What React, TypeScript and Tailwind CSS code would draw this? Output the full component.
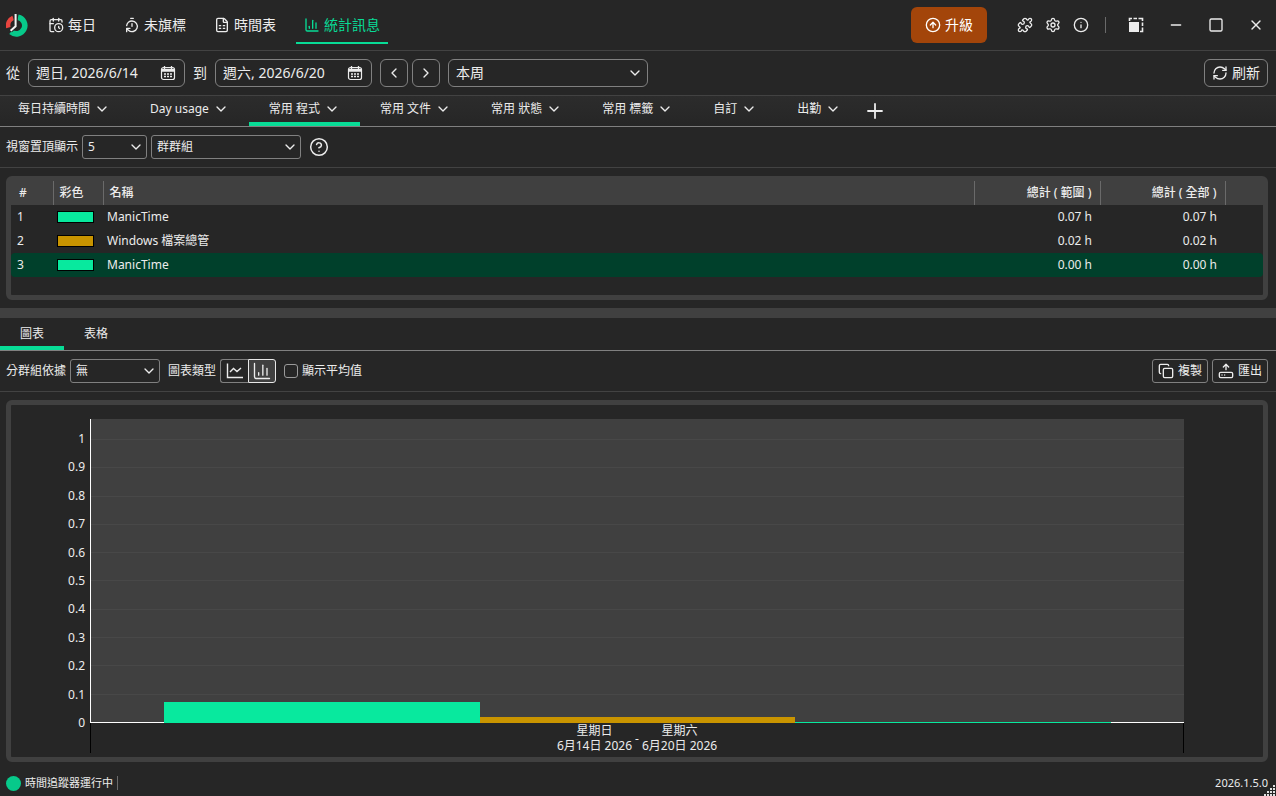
import type { ReactNode } from "react";
import {
	CalendarClock,
	ChartColumn,
	ChevronDown,
	ChevronLeft,
	ChevronRight,
	CircleArrowUp,
	CircleQuestionMark,
	Copy,
	FileSpreadsheet,
	HardDriveUpload,
	Info,
	Minus,
	Plus,
	Puzzle,
	RefreshCw,
	Settings,
	Square,
	TimerReset,
	X,
} from "lucide-react";
import clsx from "clsx";

const navItems = [
	{ label: "每日", icon: CalendarClock },
	{ label: "未旗標", icon: TimerReset },
	{ label: "時間表", icon: FileSpreadsheet },
	{ label: "統計訊息", icon: ChartColumn, active: true },
];

const reportTabs = [
	"每日持續時間",
	"Day usage",
	"常用 程式",
	"常用 文件",
	"常用 狀態",
	"常用 標籤",
	"自訂",
	"出勤",
];

const rows = [
	{ color: "bg-[#08e99e]", name: "ManicTime", range: "0.07 h", total: "0.07 h", hours: 0.074 },
	{ color: "bg-[#c99400]", name: "Windows 檔案總管", range: "0.02 h", total: "0.02 h", hours: 0.022 },
	{ color: "bg-[#08e99e]", name: "ManicTime", range: "0.00 h", total: "0.00 h", hours: 0.003 },
];

const axisLabels = ["1", "0.9", "0.8", "0.7", "0.6", "0.5", "0.4", "0.3", "0.2", "0.1", "0"];

function Logo() {
	return (
		<svg viewBox="0 0 22 24" className="h-6 w-[22px]" fill="none" aria-hidden="true">
			<path d="M12 4.2A8.4 8.4 0 1 1 5 18.9" stroke="#07c98a" strokeWidth="5.6" />
			<path d="M2.4 14.6A8.4 8.4 0 0 1 7.2 4.8" stroke="#e8453f" strokeWidth="4.6" />
			<path d="M9.6 1v12.2l-5 4.6" stroke="#262626" strokeWidth="4" />
			<path d="M9.6 1v12.2l-5 4.6" stroke="#f2f2f2" strokeWidth="2" />
		</svg>
	);
}

function CalendarIcon() {
	return (
		<svg viewBox="0 0 16 16" className="size-4" fill="none" stroke="currentColor" aria-hidden="true">
			<rect x="1.5" y="2.5" width="13" height="12" rx="2" strokeWidth="1.2" />
			<path d="M2 4.5h12M4.5 1v3M11.5 1v3M2 6h12" strokeWidth="1.3" />
			<path d="M4 9h2M7 9h2M10 9h2M4 11.5h2M7 11.5h2M10 11.5h2" strokeWidth="1.6" />
		</svg>
	);
}

function CompactIcon() {
	return (
		<svg viewBox="0 0 16 16" className="size-4" fill="none" stroke="currentColor" aria-hidden="true">
			<rect x="1" y="5" width="10" height="10" fill="currentColor" stroke="none" />
			<path d="M1.5 4V1.5H4M5.5 1.5h3.5M10.5 1.5h4V4M14.5 5.5V9M14.5 10.5v4H12" strokeWidth="1.6" />
		</svg>
	);
}

function LineChartIcon() {
	return (
		<svg viewBox="0 0 18 18" className="size-[18px]" fill="none" stroke="currentColor" strokeWidth="1.4" aria-hidden="true">
			<path d="M1.5 1.5v14h15.5" />
			<path d="m4 10 3.5-3.5 3.5 3 4-3.5" />
		</svg>
	);
}

function Select({ id, label, value, className }: { id: string; label?: string; value: string; className: string }) {
	return (
		<div className={clsx("grid items-center", className)}>
			<select
				id={id}
				aria-label={label}
				className="col-start-1 row-start-1 h-full w-full appearance-none rounded-[inherit] border border-[#808080] bg-transparent text-inherit"
			>
				<option>{value}</option>
			</select>
			<ChevronDown className="pointer-events-none col-start-1 row-start-1 mr-[3px] size-4 justify-self-end" />
		</div>
	);
}

function DateBox({ id, value }: { id: string; value: string }) {
	return (
		<div className="flex h-7 w-[157px] items-center rounded-md border border-[#808080] pl-[7px] pr-2">
			<input id={id} defaultValue={value} className="min-w-0 flex-1 bg-transparent outline-none" />
			<button type="button" aria-label="Open calendar">
				<CalendarIcon />
			</button>
		</div>
	);
}

function SmallButton({ children }: { children: ReactNode }) {
	return (
		<button type="button" className="flex h-6 w-14 items-center justify-between rounded-[3px] border border-[#808080] px-[5px]">
			{children}
		</button>
	);
}

function TitleBar() {
	return (
		<header className="flex h-[51px] shrink-0 items-center border-b border-[#424242] pl-1.5 text-sm">
			<Logo />
			<nav className="ml-3 flex h-full items-center gap-3">
				{navItems.map(({ label, icon: Icon, active }) => (
					<a
						key={label}
						href="#"
						className={clsx(
							"flex h-[38px] items-center gap-1 border-b-2 px-2 pt-0.5",
							active ? "border-[#08dc96] text-[#08dc96]" : "border-transparent",
						)}
					>
						<Icon className="size-4" />
						{label}
					</a>
				))}
			</nav>
			<button type="button" className="ml-auto flex h-9 w-[76px] items-center justify-center gap-1 rounded-md bg-[#a3450a] text-white">
				<CircleArrowUp className="size-4" />
				升級
			</button>
			<div className="ml-6 flex items-center">
				<button type="button" aria-label="Plugins" className="flex w-7 justify-center">
					<Puzzle className="size-4" />
				</button>
				<button type="button" aria-label="Settings" className="flex w-7 justify-center">
					<Settings className="size-4" />
				</button>
				<button type="button" aria-label="About" className="flex w-7 justify-center">
					<Info className="size-4" />
				</button>
			</div>
			<div className="mx-2.5 h-4 w-px bg-[#6a6a6a]" />
			{/* Window buttons */}
			<button type="button" aria-label="Compact view" className="flex w-10 justify-center">
				<CompactIcon />
			</button>
			<button type="button" aria-label="Minimize" className="flex w-10 justify-center">
				<Minus className="size-4" />
			</button>
			<button type="button" aria-label="Maximize" className="flex w-10 justify-center">
				<Square className="size-4" />
			</button>
			<button type="button" aria-label="Close" className="flex w-10 justify-center">
				<X className="size-4" />
			</button>
		</header>
	);
}

function RangeBar() {
	return (
		<div className="flex h-[45px] shrink-0 items-center gap-2 border-b border-[#424242] pl-1.5 pr-2 text-sm">
			<label htmlFor="from">從</label>
			<DateBox id="from" value="週日, 2026/6/14" />
			<label htmlFor="to">到</label>
			<DateBox id="to" value="週六, 2026/6/20" />
			<div className="flex gap-1">
				<button type="button" aria-label="Previous" className="flex size-7 items-center justify-center rounded-md border border-[#808080]">
					<ChevronLeft className="size-4" />
				</button>
				<button type="button" aria-label="Next" className="flex size-7 items-center justify-center rounded-md border border-[#808080]">
					<ChevronRight className="size-4" />
				</button>
			</div>
			<Select id="period" label="Period" value="本周" className="h-7 w-[200px] rounded-md [&>select]:pl-[7px] [&>svg]:mr-[5px]" />
			<button type="button" className="ml-auto flex h-7 w-16 items-center justify-center gap-1 rounded-md border border-[#808080]">
				<RefreshCw className="size-4" />
				刷新
			</button>
		</div>
	);
}

function ReportTabs() {
	return (
		<nav className="flex h-[31px] shrink-0 border-b border-[#808080] bg-linear-to-b from-[#2c2c2c] to-[#262626]">
			{reportTabs.map((tab) => (
				<button
					key={tab}
					type="button"
					className={clsx(
						"flex items-center gap-1 border-b-4 px-5 first:pl-[18px]",
						tab === "常用 程式" ? "border-[#08dc96]" : "border-transparent",
					)}
				>
					{tab}
					<ChevronDown className="size-4" />
				</button>
			))}
			<button type="button" aria-label="Add tab" className="ml-0.5">
				<Plus className="size-6" strokeWidth={1.8} />
			</button>
		</nav>
	);
}

function UsageTable() {
	return (
		<div className="mx-1.5 mr-2 mt-2 h-[124px] shrink-0 rounded-md border-[5px] border-[#404040]">
			<table className="w-full table-fixed text-left">
				<thead className="bg-[#404040]">
					<tr className="h-6 *:border-r *:border-[#6a6a6a] *:font-medium">
						<th className="w-[42px] pl-2">#</th>
						<th className="w-[50px] pl-1.5">彩色</th>
						<th className="pl-1.5">名稱</th>
						<th className="w-[126px] pr-2 text-right">總計 ( 範圍 )</th>
						<th className="w-[125px] pr-2 text-right">總計 ( 全部 )</th>
						<th className="w-[38px] border-r-0!" />
					</tr>
				</thead>
				<tbody>
					{rows.map((row, i) => (
						<tr key={i} className={clsx("h-6", i === 2 && "bg-[#00402b]")}>
							<td className="rounded-l-sm pl-1.5">{i + 1}</td>
							<td className="pl-1">
								<div className={clsx("h-3 w-[37px] border border-black", row.color)} />
							</td>
							<td className="pl-1">{row.name}</td>
							<td className="pr-2 text-right">{row.range}</td>
							<td className="pr-2 text-right">{row.total}</td>
							<td className="rounded-r-sm" />
						</tr>
					))}
				</tbody>
			</table>
		</div>
	);
}

function ChartToolbar() {
	return (
		<div className="flex h-[41px] shrink-0 items-center gap-1 border-b border-[#424242] pl-1.5 pr-2">
			<label htmlFor="group-by">分群組依據</label>
			<Select id="group-by" value="無" className="h-6 w-[90px] rounded-[3px] [&>select]:pl-[5px]" />
			<span className="ml-1">圖表類型</span>
			<div className="flex">
				<button
					type="button"
					aria-label="Line chart"
					className="flex h-6 w-7 items-center justify-center rounded-l-[3px] border border-r-0 border-[#808080]"
				>
					<LineChartIcon />
				</button>
				<button
					type="button"
					aria-label="Bar chart"
					aria-pressed="true"
					className="flex h-6 w-7 items-center justify-center rounded-r-[3px] border border-[#e8e8e8] bg-[#404040]"
				>
					<ChartColumn className="size-5" strokeWidth={1.6} />
				</button>
			</div>
			<label className="ml-1 flex items-center gap-1">
				<input type="checkbox" className="size-3.5 appearance-none rounded-[3px] border border-[#9a9a9a]" />
				顯示平均值
			</label>
			<div className="ml-auto flex gap-1">
				<SmallButton>
					<Copy className="size-4" />
					複製
				</SmallButton>
				<SmallButton>
					<HardDriveUpload className="size-4" />
					匯出
				</SmallButton>
			</div>
		</div>
	);
}

function Chart() {
	return (
		<div className="mx-1.5 mr-2 mt-2 flex min-h-[362px] flex-1 flex-col rounded-md border-[5px] border-[#404040] px-[79px] pb-1 pt-3.5">
			<div className="flex flex-1">
				{/* Hour labels, each centred on its grid line */}
				<div className="-mb-2 -ml-12 mt-3 flex w-12 flex-col justify-between pr-[5px] text-right">
					{axisLabels.map((label) => (
						<span key={label}>{label}</span>
					))}
				</div>
				<div className="grid flex-1 border-l border-white bg-[#404040]">
					<div className="col-start-1 row-start-1 flex flex-col border-b border-white pt-5">
						{axisLabels.slice(1).map((label) => (
							<div key={label} className="flex-1 border-t border-[#484848]" />
						))}
					</div>
					<div className="col-start-1 row-start-1 grid grid-cols-[3fr_13fr_13fr_13fr_3fr] items-end pt-5">
						{rows.map((row, i) => (
							<div
								key={i}
								className={clsx("first:col-start-2", row.color)}
								style={{ height: `${row.hours * 100}%` }}
							/>
						))}
					</div>
				</div>
			</div>
			<div className="flex h-[30px] items-center justify-center gap-[3px] border-x border-black text-center leading-[15px]">
				<div>
					星期日
					<br />
					6月14日 2026
				</div>
				<span>-</span>
				<div>
					星期六
					<br />
					6月20日 2026
				</div>
			</div>
		</div>
	);
}

function StatusBar() {
	return (
		<footer className="relative flex h-[34px] shrink-0 items-center gap-1 pl-1.5 pr-2 pt-2 text-[11px]">
			<span className="size-[15px] rounded-full bg-[#07c98a]" />
			<span>時間追蹤器運行中</span>
			<span className="h-3.5 w-px bg-[#6a6a6a]" />
			<span className="ml-auto">2026.1.5.0</span>
			{/* Resize grip */}
			<svg viewBox="0 0 12 12" className="absolute bottom-0 right-0 size-3" fill="#e0e0e0" aria-hidden="true">
				<path d="M9 1h2v2H9zM6 4h2v2H6zM9 4h2v2H9zM3 7h2v2H3zM6 7h2v2H6zM9 7h2v2H9zM0 10h2v2H0zM3 10h2v2H3zM6 10h2v2H6zM9 10h2v2H9z" />
			</svg>
		</footer>
	);
}

export default function App() {
	return (
		<div className="flex min-h-screen flex-col bg-[#262626] font-['Noto_Sans','Noto_Sans_CJK_TC',sans-serif] text-xs text-[#ececec]">
			<TitleBar />
			<RangeBar />
			<ReportTabs />
			{/* Filter */}
			<div className="flex h-[41px] shrink-0 items-center gap-1 border-b border-[#424242] pl-1.5">
				<label htmlFor="top">視窗置頂顯示</label>
				<Select id="top" value="5" className="h-6 w-[65px] rounded-[3px] [&>select]:pl-[5px]" />
				<Select id="group" label="Group" value="群群組" className="h-6 w-[150px] rounded-[3px] [&>select]:pl-[5px]" />
				<button type="button" aria-label="Help" className="ml-1">
					<CircleQuestionMark className="size-5" strokeWidth={1.8} />
				</button>
			</div>
			<UsageTable />
			{/* Splitter */}
			<div className="mt-2 h-2.5 shrink-0 bg-[#404040]" />
			<nav className="flex h-[33px] shrink-0 border-b border-[#808080]">
				<button type="button" className="border-b-4 border-[#08dc96] px-5 pt-1">
					圖表
				</button>
				<button type="button" className="border-b-4 border-transparent px-5 pt-1">
					表格
				</button>
			</nav>
			<ChartToolbar />
			<Chart />
			<StatusBar />
		</div>
	);
}
